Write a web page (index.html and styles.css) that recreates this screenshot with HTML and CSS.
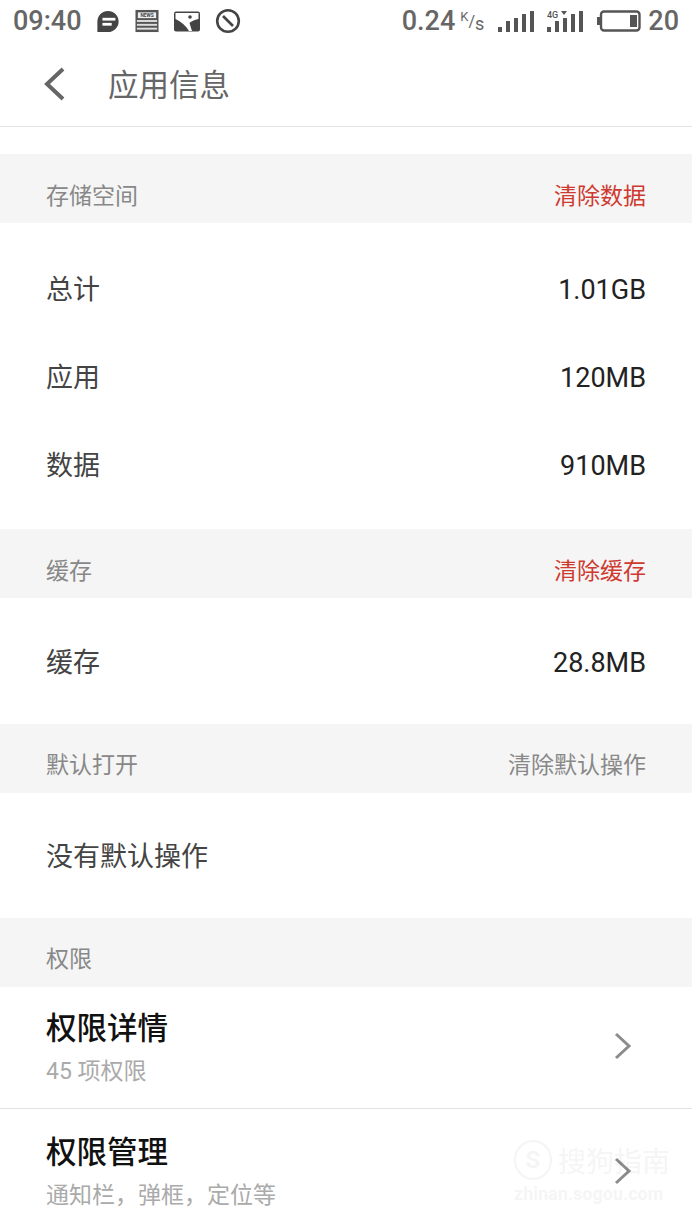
FILE: index.html
```html
<!DOCTYPE html>
<html lang="zh-CN">
<head>
    <meta charset="UTF-8">
    <meta name="viewport" content="width=device-width, initial-scale=1.0">
    <title>应用信息</title>
    <link rel="stylesheet" href="styles.css">
</head>
<body>
    <div id="container">
        <div class="status-bar">
            <span class="clock">09:40</span>
            <svg class="st-icon" width="24" height="25" viewBox="0 0 26 26"><path d="M13 1.500a11.500 11.500 0 1 1 0 23H1.500V13A11.500 11.500 0 0 1 13 1.500z" fill="#444"/><rect x="7" y="9" width="14" height="3" fill="#fff"/><rect x="7" y="14.500" width="10" height="3" fill="#fff"/></svg>
            <svg class="st-icon" width="24" height="24" viewBox="0 0 25 24"><rect x="0.500" y="0.500" width="24" height="23" fill="#555"/><rect x="3" y="3" width="19" height="6" fill="#eee"/><text x="12.500" y="8" text-anchor="middle" class="news-text">NEWS</text><rect x="2" y="11" width="21" height="2" fill="#ddd"/><rect x="2" y="15" width="21" height="2" fill="#ddd"/><rect x="2" y="19" width="21" height="2" fill="#ddd"/></svg>
            <svg class="st-icon" width="26" height="21" viewBox="0 0 26 21"><rect x="0" y="0.500" width="26" height="20" rx="2" fill="#444"/><path d="M1.500 2H24.500V8C20 8.500 17.500 10.500 15.500 12L18 20H15C12 15 7 10.500 1.500 8Z" fill="#fff"/><circle cx="16" cy="6" r="1.800" fill="#444"/></svg>
            <svg class="st-icon" width="26" height="26" viewBox="0 0 26 26" fill="none" stroke="#444"><circle cx="13" cy="13" r="10.800" stroke-width="2.600"/><path d="M8 8l10 10" stroke-width="2.600"/></svg>
            <span class="spacer"></span>
            <span class="speed">0.24</span>
            <span class="speed-unit"><sup>K</sup>/<sub>s</sub></span>
            <svg class="signal" width="36" height="22" viewBox="0 0 36 22" fill="#555"><rect x="0" y="17" width="4" height="5"/><rect x="8" y="11" width="4" height="11"/><rect x="16" y="8" width="4" height="14"/><rect x="24" y="4" width="4" height="18"/><rect x="32" y="1" width="4" height="21"/></svg>
            <svg class="signal" width="36" height="22" viewBox="0 0 36 22" fill="#555"><text x="0" y="8" class="net-text">4G</text><path d="M14 1h6l-3 4z"/><rect x="0" y="17" width="4" height="5"/><rect x="8" y="11" width="4" height="11"/><rect x="16" y="8" width="4" height="14"/><rect x="24" y="4" width="4" height="18"/><rect x="32" y="1" width="4" height="21"/></svg>
            <svg class="battery" width="44" height="22" viewBox="0 0 44 22"><rect x="0" y="7" width="3" height="8" fill="#555"/><rect x="4" y="1.500" width="38.500" height="19" rx="3" fill="none" stroke="#555" stroke-width="2.400"/><rect x="33" y="5" width="7" height="12" fill="#555"/></svg>
            <span class="battery-num">20</span>
        </div>

        <div class="title-bar">
            <svg class="back" width="24" height="34" viewBox="0 0 24 34" fill="none" stroke="#666" stroke-width="4"><path d="M21 2L5 17l16 15"/></svg>
            <span class="title">应用信息</span>
        </div>

        <div class="section first">
            <span>存储空间</span>
            <span class="action">清除数据</span>
        </div>
        <div class="rows">
            <div class="row"><span>总计</span><span class="value">1.01GB</span></div>
            <div class="row"><span>应用</span><span class="value">120MB</span></div>
            <div class="row"><span>数据</span><span class="value">910MB</span></div>
        </div>

        <div class="section">
            <span>缓存</span>
            <span class="action">清除缓存</span>
        </div>
        <div class="rows cache">
            <div class="row"><span>缓存</span><span class="value">28.8MB</span></div>
        </div>

        <div class="section tight">
            <span>默认打开</span>
            <span>清除默认操作</span>
        </div>
        <div class="rows single">
            <div class="row"><span>没有默认操作</span></div>
        </div>

        <div class="section tight">
            <span>权限</span>
        </div>
        <div class="link-row">
            <div>
                <div class="link-title">权限详情</div>
                <div class="link-sub">45 项权限</div>
            </div>
            <svg class="chevron" width="18" height="28" viewBox="0 0 18 28" fill="none" stroke="#8c8c8c" stroke-width="3"><path d="M2 2l13 12L2 26"/></svg>
        </div>
        <div class="link-row last">
            <div>
                <div class="link-title">权限管理</div>
                <div class="link-sub">通知栏，弹框，定位等</div>
            </div>
            <svg class="chevron" width="18" height="28" viewBox="0 0 18 28" fill="none" stroke="#8c8c8c" stroke-width="3"><path d="M2 2l13 12L2 26"/></svg>
        </div>

        <div class="watermark">
            <div class="wm-top">
                <span class="wm-logo">S</span>
                <span class="wm-name">搜狗指南</span>
            </div>
            <div class="wm-url">zhinan.sogou.com</div>
        </div>
    </div>
</body>
</html>
```

FILE: styles.css
```css
html, body {
    margin: 0;
    background-color: #fff;
}
body {
    font-family: "Roboto", "Noto Sans CJK SC", sans-serif;
}
#container {
    position: relative;
    width: 692px;
    height: 1230px;
    overflow: hidden;
}
.status-bar {
    display: flex;
    align-items: center;
    height: 42px;
    padding: 0 13px;
    color: #666;
    font-size: 27px;
    font-weight: 500;
}
.clock {
    margin-right: 14px;
}
.st-icon {
    margin-right: 15px;
}
.news-text {
    font-size: 5px;
    font-weight: bold;
    fill: #444;
}
.net-text {
    font-size: 9px;
    fill: #555;
}
.spacer {
    flex: 1;
}
.speed-unit {
    width: 24px;
    margin: 0 14px 0 5px;
    font-size: 16px;
    font-weight: 400;
    line-height: 1;
}
.speed-unit sup {
    font-size: 13px;
    vertical-align: 6px;
}
.speed-unit sub {
    font-size: 18px;
    vertical-align: -3px;
}
.signal {
    margin-right: 13px;
}
.battery {
    margin-left: 1px;
    margin-right: 7px;
}
.title-bar {
    display: flex;
    align-items: center;
    height: 84px;
    padding-left: 42px;
    border-bottom: 1px solid #e2e2e2;
}
.back {
    margin-right: 42px;
}
.title {
    padding-bottom: 2px;
    font-size: 30.5px;
    color: #666;
}
.section {
    display: flex;
    justify-content: space-between;
    align-items: center;
    box-sizing: border-box;
    height: 69px;
    padding: 10px 46px 0;
    background-color: #f5f5f5;
    color: #888;
    font-size: 23px;
}
.section.first {
    margin-top: 27px;
}
.section.tight {
    padding-top: 8px;
}
.action {
    color: #cf3a30;
}
.rows {
    padding: 20px 0 22px;
}
.rows.cache {
    padding: 18px 0 20px;
}
.rows.single {
    padding: 17px 0 20px;
}
.row {
    display: flex;
    justify-content: space-between;
    align-items: center;
    height: 88px;
    padding: 0 46px;
    color: #444;
    font-size: 27px;
}
.value {
    padding-top: 6px;
    color: #222;
}
.link-row {
    display: flex;
    justify-content: space-between;
    align-items: center;
    height: 121px;
    padding: 0 60px 0 46px;
    border-bottom: 1px solid #e2e2e2;
}
.link-row.last {
    padding-top: 2px;
    border-bottom: none;
}
.link-title {
    color: #111;
    font-size: 30.5px;
    font-weight: 500;
    line-height: 42px;
}
.link-sub {
    margin-top: 7px;
    color: #aaa;
    font-size: 23px;
    line-height: 30px;
}
.chevron {
    margin-top: -4px;
}
.link-row.last .chevron {
    margin-top: -2px;
}
.watermark {
    position: absolute;
    left: 514px;
    top: 1140px;
    width: 156px;
    color: #000;
    opacity: 0.035;
}
.wm-top {
    display: flex;
    align-items: center;
    gap: 6px;
}
.wm-logo {
    width: 36px;
    height: 36px;
    border: 2px solid #000;
    border-radius: 50%;
    font-size: 24px;
    font-weight: bold;
    line-height: 36px;
    text-align: center;
}
.wm-name {
    font-size: 28px;
    white-space: nowrap;
}
.wm-url {
    margin-top: 3px;
    font-size: 18px;
    font-weight: bold;
    white-space: nowrap;
}
```
